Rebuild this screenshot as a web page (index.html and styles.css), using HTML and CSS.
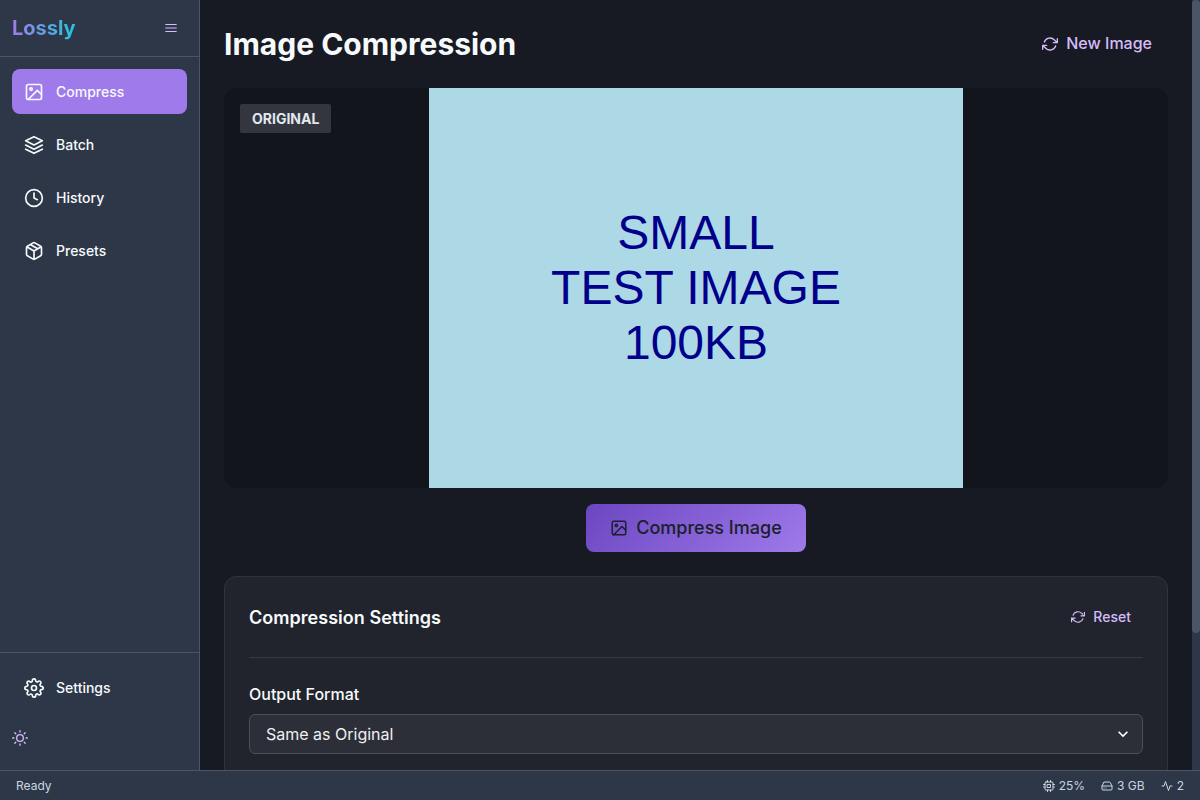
FILE: index.html
```html
<!DOCTYPE html>
<html lang="en">
<head>
<meta charset="utf-8">
<title>Lossly</title>
<link rel="stylesheet" href="styles.css">
</head>
<body>
<svg class="sprite" width="0" height="0">
  <symbol id="image" viewBox="0 0 24 24"><rect x="3" y="3" width="18" height="18" rx="2"/><circle cx="8.5" cy="8.5" r="1.5"/><path d="M21 15l-5-5L5 21"/></symbol>
  <symbol id="layers" viewBox="0 0 24 24"><path d="M12 2L2 7l10 5 10-5-10-5zM2 17l10 5 10-5M2 12l10 5 10-5"/></symbol>
  <symbol id="clock" viewBox="0 0 24 24"><circle cx="12" cy="12" r="10"/><path d="M12 6v6l4 2"/></symbol>
  <symbol id="package" viewBox="0 0 24 24"><path d="M16.5 9.4l-9-5.19M21 16V8a2 2 0 0 0-1-1.73l-7-4a2 2 0 0 0-2 0l-7 4A2 2 0 0 0 3 8v8a2 2 0 0 0 1 1.73l7 4a2 2 0 0 0 2 0l7-4A2 2 0 0 0 21 16zM3.27 6.96L12 12.01l8.73-5.05M12 22.08V12"/></symbol>
  <symbol id="gear" viewBox="0 0 24 24"><circle cx="12" cy="12" r="3"/><path d="M19.4 15a1.65 1.65 0 0 0 .33 1.82l.06.06a2 2 0 0 1 0 2.83 2 2 0 0 1-2.83 0l-.06-.06a1.65 1.65 0 0 0-1.82-.33 1.65 1.65 0 0 0-1 1.51V21a2 2 0 0 1-2 2 2 2 0 0 1-2-2v-.09A1.65 1.65 0 0 0 9 19.4a1.65 1.65 0 0 0-1.82.33l-.06.06a2 2 0 0 1-2.83 0 2 2 0 0 1 0-2.83l.06-.06a1.65 1.65 0 0 0 .33-1.82 1.65 1.65 0 0 0-1.51-1H3a2 2 0 0 1-2-2 2 2 0 0 1 2-2h.09A1.65 1.65 0 0 0 4.6 9a1.65 1.65 0 0 0-.33-1.82l-.06-.06a2 2 0 0 1 0-2.83 2 2 0 0 1 2.83 0l.06.06a1.65 1.65 0 0 0 1.82.33H9a1.65 1.65 0 0 0 1-1.51V3a2 2 0 0 1 2-2 2 2 0 0 1 2 2v.09a1.65 1.65 0 0 0 1 1.51 1.65 1.65 0 0 0 1.82-.33l.06-.06a2 2 0 0 1 2.83 0 2 2 0 0 1 0 2.83l-.06.06a1.65 1.65 0 0 0-.33 1.82V9a1.65 1.65 0 0 0 1.51 1H21a2 2 0 0 1 2 2 2 2 0 0 1-2 2h-.09a1.65 1.65 0 0 0-1.51 1z"/></symbol>
  <symbol id="menu" viewBox="0 0 24 24"><path d="M3 12h18M3 6h18M3 18h18"/></symbol>
  <symbol id="sun" viewBox="0 0 24 24"><circle cx="12" cy="12" r="5"/><path d="M12 1v2M12 21v2M4.22 4.22l1.42 1.42M18.36 18.36l1.42 1.42M1 12h2M21 12h2M4.22 19.78l1.42-1.42M18.36 5.64l1.42-1.42"/></symbol>
  <symbol id="refresh" viewBox="0 0 24 24"><path d="M23 4v6h-6M1 20v-6h6M3.51 9a9 9 0 0 1 14.85-3.36L23 10M1 14l4.64 4.36A9 9 0 0 0 20.49 15"/></symbol>
  <symbol id="cpu" viewBox="0 0 24 24"><rect x="4" y="4" width="16" height="16" rx="2"/><path d="M9 9h6v6H9zM9 1v3M15 1v3M9 20v3M15 20v3M20 9h3M20 14h3M1 9h3M1 14h3"/></symbol>
  <symbol id="drive" viewBox="0 0 24 24"><path d="M22 12H2M5.45 5.11L2 12v6a2 2 0 0 0 2 2h16a2 2 0 0 0 2-2v-6l-3.45-6.89A2 2 0 0 0 16.76 4H7.24a2 2 0 0 0-1.79 1.11zM6 16h.01M10 16h.01"/></symbol>
  <symbol id="activity" viewBox="0 0 24 24"><path d="M22 12h-4l-3 9L9 3l-3 9H2"/></symbol>
</svg>
<div class="app">
  <div class="workspace">
    <aside class="sidebar">
      <header class="brand">
        <span class="logo">Lossly</span>
        <button class="icon-button"><svg class="icon icon-sm"><use href="#menu"/></svg></button>
      </header>
      <nav class="nav">
        <a class="nav-item active"><svg class="icon icon-lg"><use href="#image"/></svg>Compress</a>
        <a class="nav-item"><svg class="icon icon-lg"><use href="#layers"/></svg>Batch</a>
        <a class="nav-item"><svg class="icon icon-lg"><use href="#clock"/></svg>History</a>
        <a class="nav-item"><svg class="icon icon-lg"><use href="#package"/></svg>Presets</a>
      </nav>
      <div class="sidebar-footer">
        <a class="nav-item"><svg class="icon icon-lg"><use href="#gear"/></svg>Settings</a>
        <button class="theme-toggle"><svg class="icon"><use href="#sun"/></svg></button>
      </div>
    </aside>
    <main class="content">
      <div class="page-head">
        <h1 class="page-title">Image Compression</h1>
        <button class="ghost"><svg class="icon"><use href="#refresh"/></svg>New Image</button>
      </div>
      <section class="preview">
        <div class="picture"><div>SMALL</div><div>TEST IMAGE</div><div>100KB</div></div>
        <span class="badge">ORIGINAL</span>
      </section>
      <button class="compress"><svg class="icon icon-md"><use href="#image"/></svg>Compress Image</button>
      <section class="card">
        <div class="card-head">
          <h2 class="card-title">Compression Settings</h2>
          <button class="ghost ghost-sm"><svg class="icon icon-sm"><use href="#refresh"/></svg>Reset</button>
        </div>
        <div class="field">
          <div class="label">Output Format</div>
          <div class="select"><span>Same as Original</span><svg class="chevron" viewBox="0 0 24 24"><path d="M16.59 8.59L12 13.17 7.41 8.59 6 10l6 6 6-6z"/></svg></div>
        </div>
      </section>
    </main>
    <div class="scrollbar"><div class="thumb"></div></div>
  </div>
  <footer class="status">
    <span class="ready">Ready</span>
    <span class="stat"><svg class="icon icon-xs"><use href="#cpu"/></svg>25%</span>
    <span class="stat"><svg class="icon icon-xs"><use href="#drive"/></svg>3 GB</span>
    <span class="stat"><svg class="icon icon-xs"><use href="#activity"/></svg>2</span>
  </footer>
</div>
</body>
</html>
```
FILE: styles.css
```css
* { box-sizing: border-box; }
body { margin: 0; font-family: Inter, sans-serif; color: #f7fafc; background: #171a22; overflow: hidden; }
button { font: inherit; color: inherit; background: none; border: 0; padding: 0; }
h1, h2 { margin: 0; }
.sprite { display: none; }
.app { height: 800px; display: flex; flex-direction: column; }
.workspace { height: 770px; display: flex; overflow: hidden; }

.icon { width: 16px; height: 16px; flex: none; fill: none; stroke: currentColor; stroke-width: 2; stroke-linecap: round; stroke-linejoin: round; }
.icon-lg { width: 20px; height: 20px; }
.icon-md { width: 18px; height: 18px; }
.icon-sm { width: 14px; height: 14px; }
.icon-xs { width: 12px; height: 12px; }

.sidebar { width: 200px; flex: none; display: flex; flex-direction: column; background: #2d3748; border-right: 1px solid #4a5568; }
.brand { height: 57px; display: flex; align-items: center; justify-content: space-between; padding: 0 12px; border-bottom: 1px solid #4a5568; }
.logo { font-size: 20px; line-height: 30px; font-weight: 700; color: transparent; background: linear-gradient(to right, #9f7aea, #22c7dc); background-clip: text; -webkit-background-clip: text; }
.icon-button { width: 32px; height: 32px; display: flex; align-items: center; justify-content: center; color: #d6bcfa; }
.nav { flex: 1; display: flex; flex-direction: column; gap: 8px; padding: 12px; }
.nav-item { height: 45px; display: flex; align-items: center; gap: 12px; padding: 0 12px; border-radius: 8px; font-size: 14px; font-weight: 500; }
.active { background: #9f7aea; }
.sidebar-footer { height: 118px; padding: 12px; border-top: 1px solid #4a5568; }
.theme-toggle { display: flex; align-items: center; height: 32px; margin-top: 12px; color: #d6bcfa; }

.content { flex: 1; min-width: 0; padding: 24px; }
.page-head { height: 40px; display: flex; align-items: center; justify-content: space-between; }
.page-title { font-size: 30px; line-height: 40px; font-weight: 700; }
.ghost { height: 40px; display: flex; align-items: center; gap: 8px; padding: 0 16px; font-size: 16px; line-height: 1.2; font-weight: 500; color: #d6bcfa; }
.ghost-sm { height: 32px; padding: 0 12px; font-size: 14px; }
.preview { position: relative; height: 400px; margin-top: 24px; display: flex; justify-content: center; border-radius: 12px; background: #12151c; overflow: hidden; }
.picture { width: 534px; padding-bottom: 1px; display: flex; flex-direction: column; justify-content: center; text-align: center; background: #add8e6; color: #00008b; font: 48px/55px "Liberation Sans", Arial, sans-serif; }
.badge { position: absolute; left: 16px; top: 16px; height: 29px; padding: 0 12px; border-radius: 2px; background: #33363e; color: #e2e8f0; font-size: 14px; line-height: 29px; font-weight: 700; }
.compress { width: 220px; height: 48px; margin: 16px auto 24px; display: flex; align-items: center; justify-content: center; gap: 8px; border-radius: 8px; background: linear-gradient(135deg, #6b46c1, #9f7aea); color: #1a202c; font-size: 18px; line-height: 1.2; font-weight: 500; }
.card { height: 300px; padding: 24px; border: 1px solid #2f323a; border-radius: 12px; background: #21242c; }
.card-head { height: 57px; display: flex; align-items: flex-start; justify-content: space-between; border-bottom: 1px solid #373a41; }
.card-title { font-size: 18px; line-height: 34px; font-weight: 600; letter-spacing: 0.03px; }
.field { padding-top: 24px; }
.label { font-size: 16px; line-height: 24px; font-weight: 500; margin-bottom: 8px; }
.select { height: 40px; display: flex; align-items: center; justify-content: space-between; padding: 0 9px 0 16px; border: 1px solid #4b4e55; border-radius: 6px; background: #2c2f37; color: #eff0f2; font-size: 16px; }
.chevron { width: 20px; height: 20px; fill: #fff; }
.scrollbar { width: 8px; flex: none; background: #2d3748; }
.thumb { height: 633px; border-radius: 4px; background: #4a5568; }

.status { height: 30px; display: flex; align-items: center; gap: 16px; padding: 0 16px; border-top: 1px solid #4a5568; background: #2d3748; color: #cbd5e0; font-size: 12px; }
.ready { flex: 1; }
.stat { display: flex; align-items: center; gap: 4px; }
```
